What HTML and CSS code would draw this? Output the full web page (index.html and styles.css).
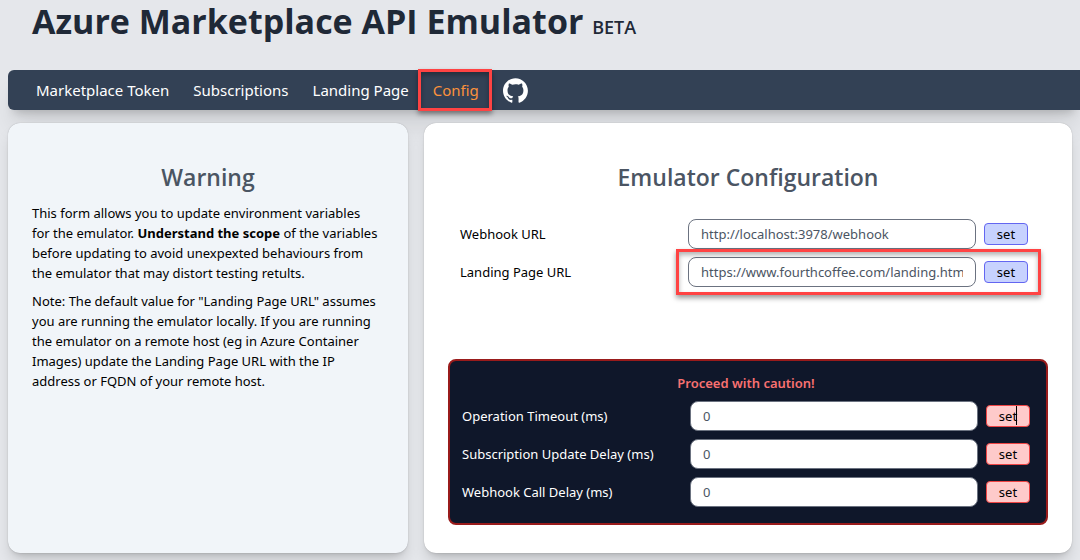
FILE: index.html
```
<!DOCTYPE html>
<html lang="en">
<head>
<meta charset="utf-8">
<meta name="viewport" content="width=device-width, initial-scale=1">
<title>Azure Marketplace API Emulator</title>
<link rel="stylesheet" href="styles.css">
</head>
<body class="page">
<header class="masthead">
  <h1 class="title">Azure Marketplace API Emulator <span class="beta">BETA</span></h1>
</header>
<nav class="nav">
  <a class="nav-link" href="#token">Marketplace Token</a>
  <a class="nav-link" href="#subscriptions">Subscriptions</a>
  <a class="nav-link" href="#landing">Landing Page</a>
  <a class="nav-link active" href="#config">Config<span class="highlight highlight-nav"></span></a>
  <a class="nav-icon" href="#github" aria-label="GitHub">
    <svg width="25" height="25" viewBox="0 0 98 96" aria-hidden="true"><path fill="#fff" fill-rule="evenodd" clip-rule="evenodd" d="M48.854 0C21.839 0 0 22 0 49.217c0 21.756 13.993 40.172 33.405 46.69 2.427.49 3.316-1.059 3.316-2.362 0-1.141-.08-5.052-.08-9.127-13.59 2.934-16.42-5.867-16.42-5.867-2.184-5.704-5.42-7.17-5.42-7.17-4.448-3.015.324-3.015.324-3.015 4.934.326 7.523 5.052 7.523 5.052 4.367 7.496 11.404 5.378 14.235 4.074.404-3.178 1.699-5.378 3.074-6.6-10.839-1.141-22.243-5.378-22.243-24.283 0-5.378 1.94-9.778 5.014-13.2-.485-1.222-2.184-6.275.486-13.038 0 0 4.125-1.304 13.426 5.052a46.97 46.97 0 0 1 12.214-1.63c4.125 0 8.33.571 12.213 1.63 9.302-6.356 13.427-5.052 13.427-5.052 2.67 6.763.97 11.816.485 13.038 3.155 3.422 5.015 7.822 5.015 13.2 0 18.905-11.404 23.06-22.324 24.283 1.78 1.548 3.316 4.481 3.316 9.126 0 6.6-.08 11.897-.08 13.526 0 1.304.89 2.853 3.316 2.364 19.412-6.52 33.405-24.935 33.405-46.691C97.707 22 75.788 0 48.854 0z"/></svg>
  </a>
</nav>
<main class="panels">
  <section class="card card-warning">
    <h2 class="card-title">Warning</h2>
    <p class="note">This form allows you to update environment variables<br>for the emulator. <strong>Understand the scope</strong> of the variables<br>before updating to avoid unexpexted behaviours from<br>the emulator that may distort testing retults.</p>
    <p class="note">Note: The default value for "Landing Page URL" assumes<br>you are running the emulator locally. If you are running<br>the emulator on a remote host (eg in Azure Container<br>Images) update the Landing Page URL with the IP<br>address or FQDN of your remote host.</p>
  </section>
  <section class="card card-config">
    <h2 class="card-title">Emulator Configuration</h2>
    <div class="settings">
      <div class="row">
        <label for="webhook">Webhook URL</label>
        <input class="field" id="webhook" type="text" value="http://localhost:3978/webhook">
        <button class="set" type="button">set</button>
      </div>
      <div class="row">
        <label for="landing-url">Landing Page URL</label>
        <input class="field" id="landing-url" type="text" value="https://www.fourthcoffee.com/landing.html">
        <button class="set" type="button">set</button>
        <span class="highlight highlight-row"></span>
      </div>
    </div>
    <div class="danger">
      <p class="caution">Proceed with caution!</p>
      <div class="row">
        <label for="timeout">Operation Timeout (ms)</label>
        <input class="field" id="timeout" type="text" value="0">
        <button class="set" type="button">set<span class="caret"></span></button>
      </div>
      <div class="row">
        <label for="update-delay">Subscription Update Delay (ms)</label>
        <input class="field" id="update-delay" type="text" value="0">
        <button class="set" type="button">set</button>
      </div>
      <div class="row">
        <label for="call-delay">Webhook Call Delay (ms)</label>
        <input class="field" id="call-delay" type="text" value="0">
        <button class="set" type="button">set</button>
      </div>
    </div>
  </section>
</main>
</body>
</html>
```
FILE: styles.css
```
* {
  box-sizing: border-box;
}

.page {
  margin: 0;
  padding-left: 8px;
  overflow: hidden;
  background: #e5e7eb;
  color: #000;
  font-family: "Segoe UI", "Noto Sans", "Open Sans", sans-serif;
  font-size: 13px;
  line-height: 20px;
}

.masthead {
  padding: 0 24px 28px;
}

.title {
  margin: 0;
  color: #1f2937;
  font-family: "Segoe UI", "Open Sans", sans-serif;
  font-size: 34px;
  font-weight: 700;
  line-height: 42px;
}

.beta {
  font-size: 18px;
  font-weight: 600;
  line-height: 20px;
}

.nav {
  display: flex;
  align-items: center;
  gap: 24px;
  height: 40px;
  padding: 0 28px;
  border-radius: 6px 0 0 6px;
  background: #334155;
  box-shadow: 0 20px 25px -5px rgba(0, 0, 0, 0.1), 0 8px 10px -6px rgba(0, 0, 0, 0.2);
}

.nav-link {
  position: relative;
  color: #fff;
  font-size: 15px;
  text-decoration: none;
}

.nav-link.active {
  color: #fb923c;
}

.nav-icon {
  display: flex;
}

.highlight {
  position: absolute;
  border: 3px solid #ff4343;
  box-shadow: 0 3px 5px rgba(0, 0, 0, 0.4), inset 0 3px 5px rgba(0, 0, 0, 0.3);
  pointer-events: none;
}

.highlight-nav {
  inset: -11px -13px -11px -15px;
}

.highlight-row {
  inset: -8px -13px -8px 216px;
}

.panels {
  display: grid;
  grid-template-columns: 400px 1fr;
  gap: 16px;
  margin: 13px 8px 24px 0;
}

.card {
  padding: 36px 24px 28px;
  border-radius: 12px;
  box-shadow: 0 0 1px rgba(0, 0, 0, 0.3), 0 10px 15px -3px rgba(0, 0, 0, 0.15), 0 4px 6px -4px rgba(0, 0, 0, 0.2);
}

.card-warning {
  background: #f1f5f9;
}

.card-config {
  background: #fff;
}

.card-title {
  margin: 0 0 8px;
  color: #4b5563;
  font-family: "Segoe UI", "Open Sans", sans-serif;
  font-size: 23px;
  font-weight: 600;
  line-height: 36px;
  text-align: center;
}

.note {
  margin: 0 0 8px;
}

.settings {
  margin-bottom: 72px;
  padding: 16px 20px 0 12px;
}

.row {
  position: relative;
  display: grid;
  grid-template-columns: 220px 1fr 44px;
  align-items: center;
  gap: 8px;
}

.row + .row {
  margin-top: 8px;
}

.field {
  width: 100%;
  height: 30px;
  padding: 0 12px;
  border: 1px solid #6b7280;
  border-radius: 8px;
  background: #fff;
  color: #4b5563;
  font: inherit;
}

.set {
  position: relative;
  height: 22px;
  padding: 0;
  border: 1px solid #6366f1;
  border-radius: 4px;
  background: #c7d2fe;
  color: #000;
  font: inherit;
}

.danger {
  padding: 12px 16px 16px 12px;
  border: 2px solid #991b1b;
  border-radius: 8px;
  background: #0f172a;
  color: #fff;
}

.danger .set {
  border-color: #ef4444;
  background: #fecaca;
}

.caution {
  margin: 0 0 8px;
  color: #f87171;
  font-weight: 600;
  text-align: center;
}

.caret {
  position: absolute;
  top: 0;
  right: 12px;
  width: 1px;
  height: 19px;
  background: #000;
}
```
